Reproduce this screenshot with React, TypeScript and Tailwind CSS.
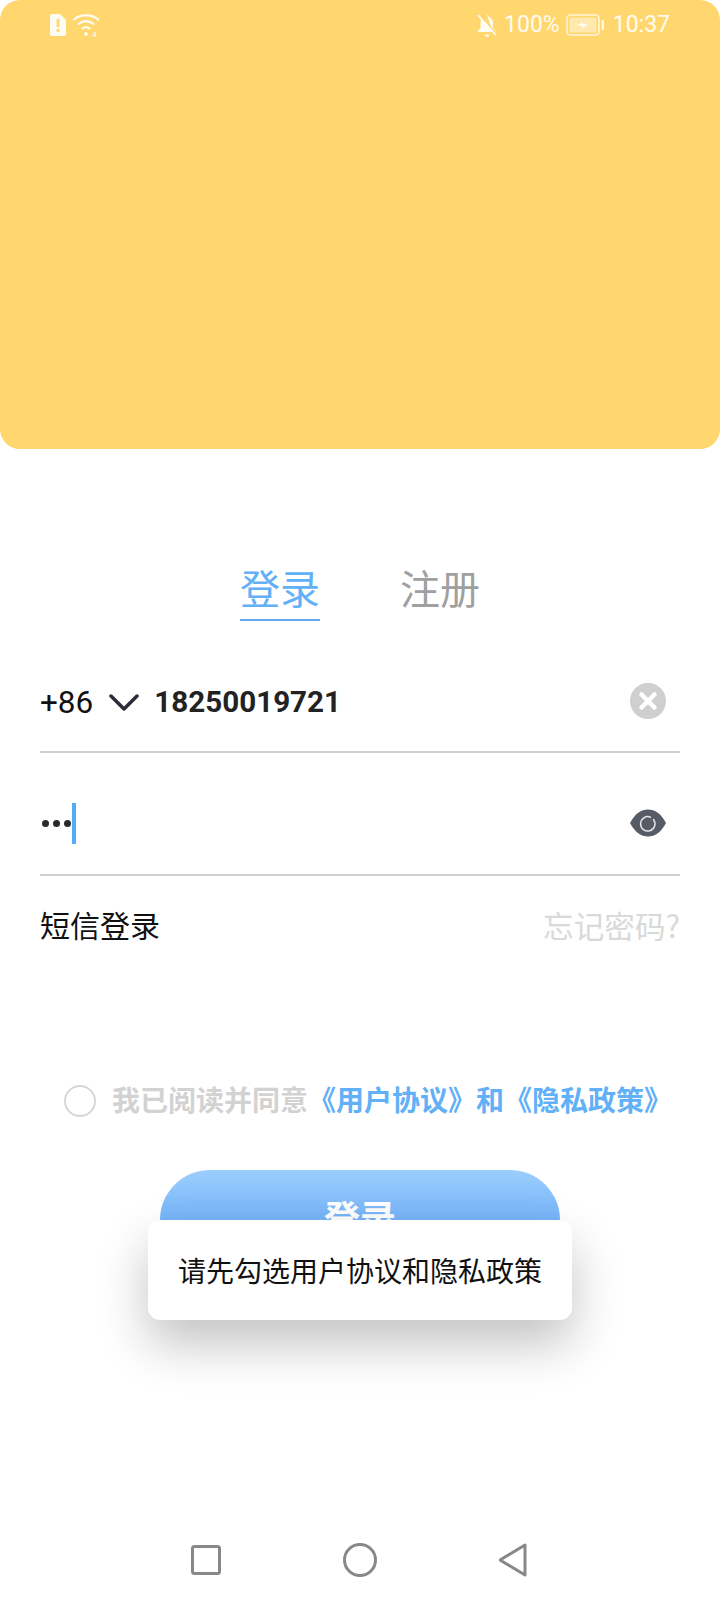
import React from 'react';

const cjk = "font-['Roboto','Noto_Sans_CJK_SC',sans-serif]";

/** Status bar glyphs, white on the yellow header. */
function SimAlertIcon() {
  return (
    <svg aria-hidden="true" width="18" height="22" viewBox="0 0 18 22">
      <path d="M3 0h8l6 6v14a2 2 0 0 1-2 2H3a2 2 0 0 1-2-2V2a2 2 0 0 1 2-2z" fill="#fff" fillOpacity="0.92" />
      <rect x="7.6" y="5" width="2.8" height="8" fill="#ffd76e" />
      <rect x="7.6" y="15" width="2.8" height="3" fill="#ffd76e" />
    </svg>
  );
}

function WifiIcon() {
  return (
    <svg aria-hidden="true" width="30" height="24" viewBox="0 0 30 24" fill="none" stroke="#fff" strokeOpacity="0.9" strokeWidth="2.2" strokeLinecap="round">
      <path d="M1 6.5C7 1 19 1 25 6.5" />
      <path d="M5.500 11c4.500-3.800 10.500-3.800 15 0" />
      <path d="M9.500 15.500c2.400-2 4.600-2 7 0" />
      <circle cx="13" cy="21" r="1.800" fill="#fff" stroke="none" />
      <text x="19" y="23.500" fontSize="8" fill="#fff" stroke="none" fontFamily="Roboto">4</text>
    </svg>
  );
}

function BellOffIcon() {
  return (
    <svg aria-hidden="true" width="22" height="24" viewBox="0 0 22 24">
      <path d="M11 1.500a1.500 1.500 0 0 1 1.500 1.500v.8c3 .8 4.500 3.200 4.500 6.200v5l3 3v1H2v-1l2.500-3v-5.500c0-1.500.3-2.800 1-3.900l11 13" fill="#fff" fillOpacity="0.92" />
      <path d="M2 2l18 20" stroke="#fff" strokeWidth="1.800" />
      <path d="M3.500 1.500l18 20" stroke="#ffd76e" strokeWidth="1.200" />
      <rect x="9" y="21.500" width="4" height="2" rx="1" fill="#fff" />
    </svg>
  );
}

function BatteryIcon() {
  return (
    <svg aria-hidden="true" width="38" height="22" viewBox="0 0 38 22">
      <rect x="1" y="1" width="32" height="20" rx="3.500" fill="none" stroke="#fff" strokeOpacity="0.75" strokeWidth="1.600" />
      <rect x="3.500" y="3.500" width="27" height="15" rx="1.500" fill="#fff" fillOpacity="0.45" />
      <path d="M11 11.500l6-3.500v2.500h5.500l-6 3.500v-2.500z" fill="#fff" />
      <rect x="35.500" y="6" width="2.500" height="10" rx="1" fill="#fff" fillOpacity="0.85" />
    </svg>
  );
}

function StatusBar() {
  return (
    <div className="flex items-center justify-between pl-[49px] pr-[50px] pt-[12px]">
      <div className="flex items-center gap-[6px]">
        <SimAlertIcon />
        <WifiIcon />
      </div>
      <div className="flex items-center font-['Roboto',sans-serif] text-[23px] leading-[26px] text-white/90">
        <BellOffIcon />
        <span className="ml-[6px]">100%</span>
        <span className="ml-[6px] flex"><BatteryIcon /></span>
        <span className="ml-[9px]">10:37</span>
      </div>
    </div>
  );
}

function ClearIcon() {
  return (
    <svg aria-hidden="true" width="36" height="36" viewBox="0 0 36 36">
      <circle cx="18" cy="18" r="18" fill="#cfcfcf" />
      <path d="M11.500 11.500l13 13M24.500 11.500l-13 13" stroke="#fff" strokeWidth="4.500" strokeLinecap="round" />
    </svg>
  );
}

function EyeIcon() {
  return (
    <svg aria-hidden="true" width="36" height="28" viewBox="0 0 36 28">
      <path d="M0 14C5 4.500 11 .5 18 .5S31 4.500 36 14c-5 9.500-11 13.500-18 13.500S5 23.500 0 14z" fill="#585a66" />
      <path d="M23.500 10.500a7.200 7.200 0 1 1-3-2.300" fill="none" stroke="#e4e4e8" strokeWidth="1.500" strokeLinecap="round" />
    </svg>
  );
}

export default function App() {
  return (
    <div className={`relative flex h-[1600px] w-[720px] flex-col overflow-hidden bg-white ${cjk}`}>
      <header className="h-[449px] shrink-0 rounded-[20px] bg-[#ffd76e]">
        <StatusBar />
      </header>

      <nav className="mt-[119px] flex justify-center gap-[80px] text-[40px] leading-[46px]">
        <span className="border-b-2 border-[#62abee] pb-[5px] text-[#62b0f7]">登录</span>
        <span className="text-[#a0a0a0]">注册</span>
      </nav>

      <div className="mx-[40px] mt-[33px] flex h-[99px] items-center border-b-2 border-[#cfcfcf]">
        <span className="text-[31.5px] leading-none text-[#111]">+86</span>
        <svg aria-hidden="true" className="ml-[16px]" width="30" height="18" viewBox="0 0 30 18" fill="none" stroke="#2c2c3a" strokeWidth="3.500" strokeLinecap="round" strokeLinejoin="round">
          <path d="M2 2l13 13L28 2" />
        </svg>
        <span className="ml-[15px] text-[29.6px] font-bold leading-none text-[#222]">18250019721</span>
        <span className="mb-[4px] ml-auto mr-[14px] flex"><ClearIcon /></span>
      </div>

      <div className="mx-[40px] flex h-[123px] items-center border-b-2 border-[#cfcfcf] pt-[20px]">
        <span className="ml-[2px] flex items-center gap-[3.7px]">
          <i className="h-[7.3px] w-[7.3px] rounded-full bg-[#2a2a2a]" />
          <i className="h-[7.3px] w-[7.3px] rounded-full bg-[#2a2a2a]" />
          <i className="h-[7.3px] w-[7.3px] rounded-full bg-[#2a2a2a]" />
        </span>
        <span className="ml-[1px] h-[41px] w-[4px] bg-[#55abf6]" />
        <span className="mb-[2px] ml-auto mr-[14px] flex"><EyeIcon /></span>
      </div>

      <div className="mx-[40px] mt-[31px] flex items-center justify-between">
        <span className="text-[30px] leading-[40px] text-[#111]">短信登录</span>
        <span className="-mt-[4px] font-['Noto_Sans_CJK_SC',sans-serif] text-[30.6px] leading-[40px] text-[#d9d9d9]">忘记密码?</span>
      </div>

      <div className="ml-[64px] mt-[135px] flex items-center">
        <span className="h-[32px] w-[32px] shrink-0 rounded-full border-2 border-[#d3d6dc]" />
        <span className="ml-[16px] whitespace-nowrap pt-[2px] text-[28px] font-bold leading-[36px] text-[#d2d2d2] [text-spacing-trim:space-all]">
          我已阅读并同意<span className="text-[#62b0f7]">《用户协议》和《隐私政策》</span>
        </span>
      </div>

      <button className="mx-auto mt-[50px] flex h-[100px] w-[400px] justify-center rounded-[50px] bg-gradient-to-b from-[#9bcefd] to-[#4f98f3] pt-[27px] text-[36px] font-bold leading-[46px] text-white">
        登录
      </button>

      {/* toast sits over the login button */}
      <div className="absolute left-[148px] top-[1220px] flex h-[100px] w-[424px] items-center justify-center rounded-[12px] bg-white pt-[6px] text-[28px] text-[#111] shadow-[0_24px_50px_rgba(0,0,0,0.24)]">
        请先勾选用户协议和隐私政策
      </div>

      <div className="mt-auto flex h-[80px] items-center justify-center gap-[122px] pr-[2px]">
        <svg aria-hidden="true" width="30" height="30" viewBox="0 0 30 30" fill="none" stroke="#888" strokeWidth="3">
          <rect x="1.500" y="1.500" width="27" height="27" rx="2" />
        </svg>
        <svg aria-hidden="true" width="34" height="34" viewBox="0 0 34 34" fill="none" stroke="#888" strokeWidth="3">
          <circle cx="17" cy="17" r="15.500" />
        </svg>
        <svg aria-hidden="true" width="28" height="34" viewBox="0 0 28 34" fill="none" stroke="#888" strokeWidth="3" strokeLinejoin="round">
          <path d="M26 2v30L1 17z" />
        </svg>
      </div>
    </div>
  );
}
